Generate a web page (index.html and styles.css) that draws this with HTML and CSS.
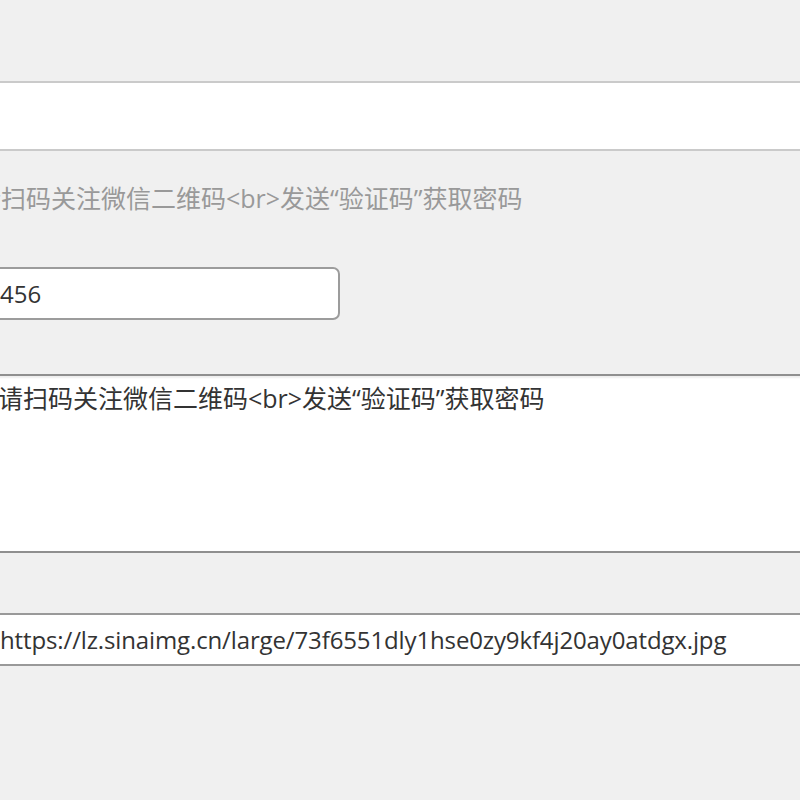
FILE: index.html
```html
<!DOCTYPE html>
<html lang="zh-CN">
<head>
  <meta charset="UTF-8" />
  <meta name="viewport" content="width=device-width,initial-scale=1" />
  <title>设置</title>
  <link rel="stylesheet" href="styles.css">
</head>
<body>
  <form class="settings">
    <div class="field">
      <input type="text" class="box-input" name="qrcode" value="" />
      <p class="description">请扫码关注微信二维码&lt;br&gt;发送“验证码”获取密码</p>
    </div>

    <div class="field">
      <input type="text" class="code-input" name="code" value="456" />
    </div>

    <div class="field">
      <textarea class="tip-text" name="tip">请扫码关注微信二维码&lt;br&gt;发送“验证码”获取密码</textarea>
    </div>

    <div class="field">
      <input type="text" class="url-input" name="img" value="https://lz.sinaimg.cn/large/73f6551dly1hse0zy9kf4j20ay0atdgx.jpg" />
    </div>
  </form>
</body>
</html>
```

FILE: styles.css
```css
body {
  margin: 0;
  background: #f0f0f0;
  font-family: "Open Sans", "Noto Sans CJK SC", sans-serif;
  color: #333;
  overflow: hidden;
}
.settings {
  margin-left: -24px;
  padding-top: 81px;
  display: flex;
  flex-direction: column;
}
.field input,
.field textarea {
  font-family: "Open Sans", "Noto Sans CJK SC", sans-serif;
  font-size: 24px;
  color: #333;
  background: #fff;
  box-sizing: border-box;
  outline: none;
  display: block;
}
.box-input {
  width: 880px;
  height: 70px;
  border: 2px solid #cacaca;
  border-radius: 0;
  padding: 0 22px;
}
.description {
  margin: 29px 0 0 0;
  font-size: 25px;
  line-height: 36px;
  color: #999;
}
.code-input {
  margin-top: 51px;
  width: 364px;
  height: 53px;
  border: 2px solid #9c9c9c;
  border-radius: 7px;
  padding: 0 22px;
}
.field .tip-text {
  margin-top: 54px;
  width: 880px;
  height: 179px;
  border: 2px solid #8f8f8f;
  border-radius: 0;
  padding: 4px 17px 4px 20px;
  font-size: 25px;
  line-height: 36px;
  resize: none;
  box-shadow: inset 0 2px 2px rgba(0,0,0,0.07);
}
.url-input {
  margin-top: 60px;
  width: 880px;
  height: 53px;
  border: 2px solid #999;
  border-radius: 0;
  padding: 0 22px;
  letter-spacing: -0.13px;
}
```
